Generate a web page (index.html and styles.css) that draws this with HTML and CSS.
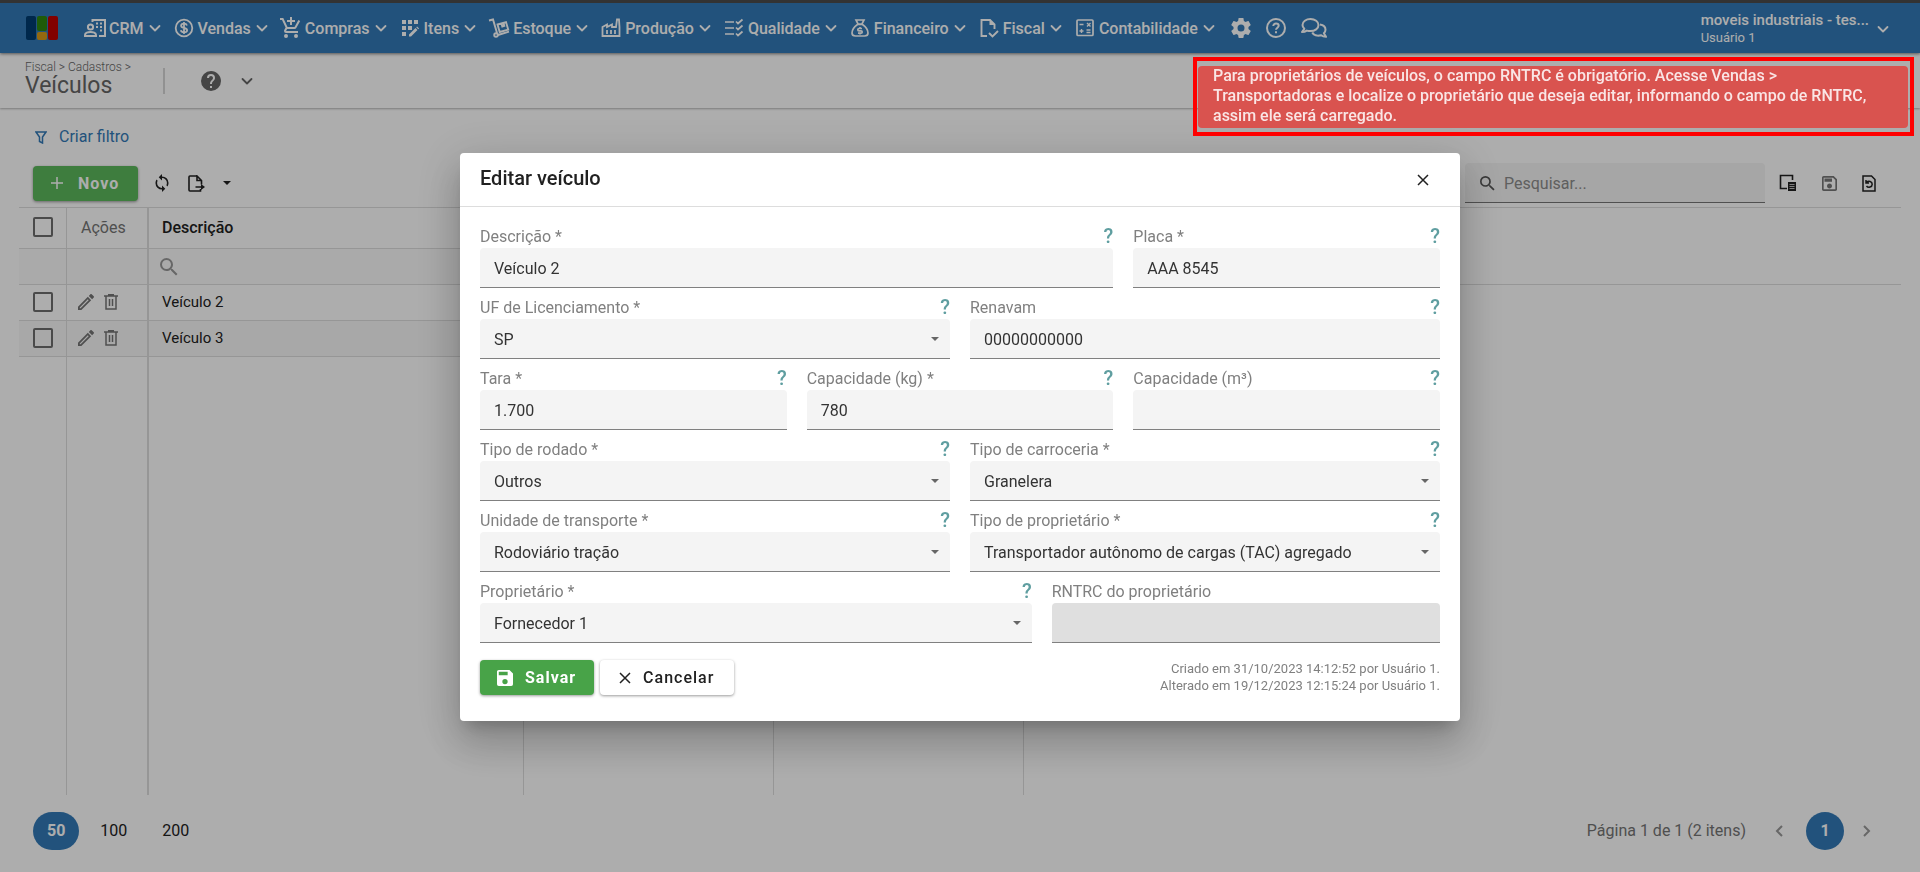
FILE: index.html
```html
<!DOCTYPE html>
<html lang="pt-BR">
<head>
  <meta charset="UTF-8">
  <title>Veículos</title>
  <meta name="viewport" content="width=device-width, initial-scale=1.0">
  <link rel="stylesheet" href="styles.css">
</head>
<body>

  <!-- shared icons -->
  <svg class="sprite" width="0" height="0">
    <symbol id="chevron" viewBox="0 0 12 12"><path d="M1.500 4L6 8.500 10.500 4" fill="none" stroke="currentColor" stroke-width="1.800" stroke-linecap="round" stroke-linejoin="round"/></symbol>
    <symbol id="search" viewBox="3 3 18 18"><path d="M9.5,3A6.5,6.5 0 0,1 16,9.5C16,11.11 15.41,12.59 14.44,13.73L14.71,14H15.5L20.5,19L19,20.5L14,15.5V14.71L13.73,14.44C12.59,15.41 11.11,16 9.5,16A6.5,6.5 0 0,1 3,9.5A6.5,6.5 0 0,1 9.5,3M9.5,5C7,5 5,7 5,9.5C5,12 7,14 9.5,14C12,14 14,12 14,9.5C14,7 12,5 9.5,5Z"/></symbol>
    <symbol id="pencil" viewBox="3 3 18 18"><path d="M14.06,9L15,9.94L5.92,19H5V18.08L14.06,9M17.66,3C17.41,3 17.15,3.1 16.96,3.29L15.13,5.12L18.88,8.87L20.71,7.04C21.1,6.65 21.1,6 20.71,5.63L18.37,3.29C18.17,3.09 17.92,3 17.66,3M14.06,6.19L3,17.25V21H6.75L17.81,9.94L14.06,6.19Z"/></symbol>
    <symbol id="trash" viewBox="0 0 14 16"><path d="M0 2h14M2 2v13h10V2M5.500 5v7M8.500 5v7" fill="none" stroke="currentColor" stroke-width="1.500"/><path d="M4 0h6v2H4z"/></symbol>
    <symbol id="close" viewBox="0 0 12 12"><path d="M1 1l10 10M11 1L1 11" fill="none" stroke="currentColor" stroke-width="1.5"/></symbol>
  </svg>

  <header class="topbar">
    <a class="logo" href="#" aria-label="Início">
      <svg width="32" height="24" viewBox="0 0 32 24">
        <rect x="0" y="0" width="10" height="24" rx="2" fill="#003c70"/>
        <rect x="11" y="0" width="10" height="15" rx="2" fill="#2f860c"/>
        <rect x="11" y="16" width="10" height="8" rx="2" fill="#d99a17"/>
        <rect x="22" y="0" width="10" height="24" rx="2" fill="#c00000"/>
      </svg>
    </a>
    <nav class="menu">
      <a class="menu-item" href="#">
        <svg class="menu-icon" viewBox="0 0 24 24" fill="none" stroke="currentColor" stroke-width="2"><circle cx="7.500" cy="11" r="2.600"/><path d="M2 20v-1c0-2 3-3 5.500-3s5.500 1 5.500 3v1zM9.500 6V4H22v16h-6"/><path d="M13 7.500h2M17 7.500h2M13 11h2M17 11h2M17 14.500h2" stroke-width="1.800"/></svg>
        <span>CRM</span><svg class="chev"><use href="#chevron"/></svg>
      </a>
      <a class="menu-item" href="#">
        <svg class="menu-icon" viewBox="0 0 24 24" fill="none" stroke="currentColor" stroke-width="1.800"><circle cx="12" cy="12" r="8.300"/><path d="M15 9.500c-.5-1.300-1.500-1.800-3-1.800-1.700 0-2.900.8-2.900 2.100 0 3 6 1.400 6 4.400 0 1.300-1.300 2.100-3.100 2.100-1.600 0-2.800-.7-3.200-2M12 6v12"/></svg>
        <span>Vendas</span><svg class="chev"><use href="#chevron"/></svg>
      </a>
      <a class="menu-item" href="#">
        <svg class="menu-icon" viewBox="0 0 24 24" fill="currentColor"><path d="M11 9H13V6H16V4H13V1H11V4H8V6H11M7 18A2 2 0 1 0 9 20A2 2 0 0 0 7 18M17 18A2 2 0 1 0 19 20A2 2 0 0 0 17 18M7.17 14.75L7.2 14.63L8.1 13H15.55C16.3 13 16.96 12.59 17.3 11.97L21.16 4.96L19.42 4H19.41L18.31 6L15.55 11H8.53L8.4 10.73L6.16 6L5.21 4L4.27 2H1V4H3L6.6 11.59L5.25 14.04C5.09 14.32 5 14.65 5 15A2 2 0 0 0 7 17H19V15H7.42A.25.25 0 0 1 7.17 14.75Z"/></svg>
        <span>Compras</span><svg class="chev"><use href="#chevron"/></svg>
      </a>
      <a class="menu-item" href="#">
        <svg class="menu-icon" viewBox="0 0 24 24" fill="currentColor"><path d="M4 4h4v4H4zM10 4h4v4h-4zM16 4h4v4h-4zM4 10h4v4H4zM10 10h4v4h-4zM4 16h4v4H4z"/><path d="M11 18.500l6.500-6.500 2 2-6.500 6.500h-2zM18.200 11.300l.9-.9 2 2-.9.9z"/></svg>
        <span>Itens</span><svg class="chev"><use href="#chevron"/></svg>
      </a>
      <a class="menu-item" href="#">
        <svg class="menu-icon" viewBox="0 0 24 24" fill="none" stroke="currentColor" stroke-width="1.900"><path d="M2 4.500L6 3.500 10 17M11 19l11-3.300"/><circle cx="9" cy="19" r="1.800"/><path d="M10.500 8.500l8.500-2.400 2.200 7.500-8.500 2.400zM14.500 7.500l.8 3 2-.6-.8-3"/></svg>
        <span>Estoque</span><svg class="chev"><use href="#chevron"/></svg>
      </a>
      <a class="menu-item" href="#">
        <svg class="menu-icon" viewBox="0 0 24 24" fill="none" stroke="currentColor" stroke-width="1.800"><path d="M3.500 20v-9L8 8.500V11l5-2.500V11h4L18 3.500h2l.5 7.500v9zM8 14v4M12 14v4M16 14v4"/></svg>
        <span>Produção</span><svg class="chev"><use href="#chevron"/></svg>
      </a>
      <a class="menu-item" href="#">
        <svg class="menu-icon" viewBox="0 0 24 24" fill="none" stroke="currentColor" stroke-width="1.700"><path d="M3 6h9M3 12h9M3 18h9M14 5.500l2 2L20.500 3.500M14 11.500l2 2 4.500-4M14 17.500l2 2 4.500-4"/></svg>
        <span>Qualidade</span><svg class="chev"><use href="#chevron"/></svg>
      </a>
      <a class="menu-item" href="#">
        <svg class="menu-icon" viewBox="0 0 24 24" fill="none" stroke="currentColor" stroke-width="1.700"><path d="M8 4h8l-2 4h-4zM9.500 8.500h5C18 11 20 14 20 17c0 2-1.500 3-3.500 3h-9C5.500 20 4 19 4 17c0-3 2-6 5.500-8.500z"/><path d="M14 12.500h-3c-1.600 0-1.600 2.300 0 2.300h2c1.600 0 1.600 2.300 0 2.300h-3M12 11v1.500M12 17v1.500"/></svg>
        <span>Financeiro</span><svg class="chev"><use href="#chevron"/></svg>
      </a>
      <a class="menu-item" href="#">
        <svg class="menu-icon" viewBox="0 0 24 24" fill="none" stroke="currentColor" stroke-width="1.900"><path d="M10 20H4.500V4H13l4.500 4.500V13M12 17l3.500 3.500L21 15"/><path d="M12.500 3.500v5.500h5.500z" fill="currentColor" stroke="none"/></svg>
        <span>Fiscal</span><svg class="chev"><use href="#chevron"/></svg>
      </a>
      <a class="menu-item" href="#">
        <svg class="menu-icon" viewBox="0 0 24 24" fill="none" stroke="currentColor" stroke-width="1.700"><rect x="4" y="4" width="16" height="15.500" rx="1"/><path d="M6.500 8.500h4M6.500 15h4M8.500 13v4M13.500 14h4M13.500 16.500h4M14 7l3.500 3.500M17.500 7L14 10.500" stroke-width="1.400"/></svg>
        <span>Contabilidade</span><svg class="chev"><use href="#chevron"/></svg>
      </a>
    </nav>
    <div class="shortcuts">
      <a href="#" aria-label="Configurações"><svg width="20" height="20" viewBox="2 2 20 20" fill="currentColor"><path d="M12,15.500A3.500,3.500 0 0,1 8.500,12A3.500,3.500 0 0,1 12,8.500A3.500,3.500 0 0,1 15.500,12A3.500,3.500 0 0,1 12,15.500M19.430,12.970C19.470,12.650 19.500,12.330 19.500,12C19.500,11.670 19.470,11.340 19.430,11L21.540,9.370C21.730,9.220 21.780,8.950 21.660,8.730L19.660,5.270C19.540,5.050 19.270,4.960 19.050,5.050L16.560,6.050C16.040,5.660 15.500,5.320 14.870,5.070L14.500,2.420C14.460,2.180 14.250,2 14,2H10C9.750,2 9.540,2.180 9.500,2.420L9.130,5.070C8.500,5.320 7.960,5.660 7.440,6.050L4.950,5.050C4.730,4.960 4.460,5.050 4.340,5.270L2.340,8.730C2.210,8.950 2.270,9.220 2.460,9.370L4.570,11C4.530,11.340 4.500,11.670 4.500,12C4.500,12.330 4.530,12.650 4.570,12.970L2.460,14.630C2.270,14.780 2.210,15.050 2.340,15.270L4.340,18.730C4.460,18.950 4.730,19.030 4.950,18.950L7.440,17.940C7.960,18.340 8.500,18.680 9.130,18.930L9.500,21.580C9.540,21.820 9.750,22 10,22H14C14.250,22 14.460,21.820 14.500,21.580L14.870,18.930C15.500,18.670 16.040,18.340 16.560,17.940L19.050,18.950C19.270,19.030 19.540,18.950 19.660,18.730L21.660,15.270C21.780,15.050 21.730,14.780 21.540,14.630L19.430,12.970Z"/></svg></a>
      <a href="#" aria-label="Ajuda"><svg width="20" height="20" viewBox="0 0 20 20" fill="none" stroke="currentColor" stroke-width="2"><circle cx="10" cy="10" r="9"/><path d="M7.300 8c0-1.600 1.200-2.500 2.700-2.500s2.700.9 2.700 2.300c0 1.800-2.700 2-2.700 4M10 13.200v2"/></svg></a>
      <a href="#" aria-label="Mensagens"><svg width="26" height="20" viewBox="0 0 26 20" fill="none" stroke="currentColor" stroke-width="2" stroke-linejoin="round"><path d="M9.500 1C5 1 1.500 3.500 1.500 7c0 1.500.7 2.800 1.800 3.800L1 14c2 0 3.500-.5 4.800-1.400 1.100.3 2.300.5 3.700.5 4.500 0 8-2.600 8-6s-3.500-6.100-8-6.100z"/><path d="M19 6.500c3.200.5 5.500 2.500 5.500 5.200 0 1.400-.6 2.600-1.600 3.600L25 18.800c-2 0-3.600-.5-4.800-1.500-4 1-7.700-.3-9-2.800"/></svg></a>
    </div>
    <a class="account" href="#">
      <span class="account-text"><strong>moveis industriais - tes...</strong><small>Usuário 1</small></span>
      <svg class="chev"><use href="#chevron"/></svg>
    </a>
  </header>

  <div class="page-head">
    <div>
      <div class="crumbs">Fiscal &gt; Cadastros &gt;</div>
      <h1>Veículos</h1>
    </div>
    <div class="divider"></div>
    <button class="icon-btn" aria-label="Ajuda"><svg width="20" height="20" viewBox="2 2 20 20"><path d="M15.070,11.250L14.170,12.170C13.450,12.890 13,13.500 13,15H11V14.500C11,13.390 11.450,12.390 12.170,11.670L13.410,10.410C13.780,10.050 14,9.550 14,9C14,7.890 13.100,7 12,7A2,2 0 0,0 10,9H8A4,4 0 0,1 12,5A4,4 0 0,1 16,9C16,9.880 15.640,10.670 15.070,11.250M13,19H11V17H13M12,2A10,10 0 0,0 2,12A10,10 0 0,0 12,22A10,10 0 0,0 22,12C22,6.470 17.500,2 12,2Z"/></svg></button>
    <button class="icon-btn" aria-label="Mais"><svg class="chev"><use href="#chevron"/></svg></button>
  </div>

  <main>
    <a class="filter-link" href="#">
      <svg width="12" height="13" viewBox="0 0 12 13"><path d="M1 1h10L7.500 6v6l-3-1.500V6z" fill="none" stroke="currentColor" stroke-width="1.500"/></svg>
      Criar filtro
    </a>

    <div class="toolbar">
      <button class="btn btn-green btn-new"><svg width="12" height="12" viewBox="0 0 12 12"><path d="M6 0v12M0 6h12" stroke="currentColor" stroke-width="1.500"/></svg>Novo</button>
      <button class="icon-btn" aria-label="Atualizar"><svg width="16" height="18" viewBox="3 1 18 22"><path d="M12,18A6,6 0 0,1 6,12C6,11 6.250,10.030 6.700,9.200L5.240,7.740C4.460,8.970 4,10.430 4,12A8,8 0 0,0 12,20V23L16,19L12,15M12,4V1L8,5L12,9V6A6,6 0 0,1 18,12C18,13 17.750,13.970 17.300,14.800L18.760,16.260C19.540,15.030 20,13.570 20,12A8,8 0 0,0 12,4Z"/></svg></button>
      <button class="icon-btn" aria-label="Exportar"><svg width="17" height="17" viewBox="0 0 17 17"><path d="M9 1H2C1.400 1 1 1.400 1 2v13c0 .6.400 1 1 1h10.500v-2M13.500 9.500V5.500L9 1v4.500h4.500M7.500 12H14" fill="none" stroke="currentColor" stroke-width="1.600"/><path d="M13 9l4 3-4 3z"/></svg></button>
      <button class="icon-btn" aria-label="Opções"><svg width="8" height="4" viewBox="0 0 8 4"><path d="M0 0h8L4 4z"/></svg></button>
      <div class="search-box">
        <svg width="15" height="15"><use href="#search"/></svg>
        <input type="text" placeholder="Pesquisar..." aria-label="Pesquisar">
      </div>
      <div class="grid-tools">
        <button class="icon-btn" aria-label="Colunas"><svg width="18" height="18" viewBox="0 0 18 18"><path d="M8 14.500H1.500v-13h12V6" fill="none" stroke="currentColor" stroke-width="1.600"/><path d="M9 8h8v9H9z"/><path d="M10.500 10.500h5M10.500 12.500h5M10.500 14.500h5" stroke="#fff" stroke-width="0.700"/></svg></button>
        <button class="icon-btn muted" aria-label="Salvar layout"><svg width="15" height="15" viewBox="3 3 18 18"><path d="M17 3H5C3.890 3 3 3.900 3 5V19C3 20.100 3.890 21 5 21H19C20.100 21 21 20.100 21 19V7L17 3M19 19H5V5H16.170L19 7.830V19M12 12C10.340 12 9 13.340 9 15S10.340 18 12 18 15 16.660 15 15 13.660 12 12 12M6 6H15V10H6V6Z"/></svg></button>
        <button class="icon-btn" aria-label="Restaurar layout"><svg width="14" height="17" viewBox="0 0 14 17"><path d="M1 1h8.500L13 4.500V16H1zM4.500 7.500C6.500 5.200 10.200 6.500 10.200 9.200c0 3-4 4-5.700 1.800M4 5v3h3" fill="none" stroke="currentColor" stroke-width="1.500"/></svg></button>
      </div>
    </div>

    <div class="grid">
      <table>
        <colgroup><col class="col-check"><col class="col-actions"><col class="col-desc"><col class="col-data"><col class="col-data"><col></colgroup>
        <thead>
          <tr>
            <th><input type="checkbox" aria-label="Selecionar todos"></th>
            <th class="th-actions">Ações</th>
            <th>Descrição</th>
            <th></th>
            <th></th>
            <th></th>
          </tr>
        </thead>
        <tbody>
          <tr class="filter-row">
            <td></td><td></td>
            <td><svg width="18" height="18"><use href="#search"/></svg></td>
            <td></td><td></td><td></td>
          </tr>
          <tr>
            <td><input type="checkbox" aria-label="Selecionar Veículo 2"></td>
            <td><div class="actions">
              <button class="icon-btn" aria-label="Editar"><svg width="16" height="16"><use href="#pencil"/></svg></button>
              <button class="icon-btn" aria-label="Excluir"><svg width="14" height="16"><use href="#trash"/></svg></button>
            </div></td>
            <td>Veículo 2</td><td></td><td></td><td></td>
          </tr>
          <tr class="alt">
            <td><input type="checkbox" aria-label="Selecionar Veículo 3"></td>
            <td><div class="actions">
              <button class="icon-btn" aria-label="Editar"><svg width="16" height="16"><use href="#pencil"/></svg></button>
              <button class="icon-btn" aria-label="Excluir"><svg width="14" height="16"><use href="#trash"/></svg></button>
            </div></td>
            <td>Veículo 3</td><td></td><td></td><td></td>
          </tr>
          <tr class="filler"><td></td><td></td><td></td><td></td><td></td><td></td></tr>
        </tbody>
      </table>
    </div>

    <div class="pager">
      <button class="page-size active">50</button>
      <button class="page-size">100</button>
      <button class="page-size">200</button>
      <span class="page-info">Página 1 de 1 (2 itens)</span>
      <button class="page-arrow" aria-label="Anterior"><svg width="8" height="12" viewBox="0 0 8 12"><path d="M7 1L2 6l5 5" fill="none" stroke="currentColor" stroke-width="2"/></svg></button>
      <button class="page-size page-num active">1</button>
      <button class="page-arrow" aria-label="Próxima"><svg width="8" height="12" viewBox="0 0 8 12"><path d="M1 1l5 5-5 5" fill="none" stroke="currentColor" stroke-width="2"/></svg></button>
    </div>
  </main>

  <div class="overlay">
    <form class="modal" role="dialog" aria-labelledby="modal-title">
      <div class="modal-head">
        <h2 id="modal-title">Editar veículo</h2>
        <button type="button" class="icon-btn" aria-label="Fechar"><svg width="12" height="12"><use href="#close"/></svg></button>
      </div>
      <div class="modal-body">
        <div class="fields">
          <div class="field span-8">
            <div class="field-top"><label for="descricao">Descrição *</label><span class="hint">?</span></div>
            <input type="text" id="descricao" value="Veículo 2">
          </div>
          <div class="field span-4">
            <div class="field-top"><label for="placa">Placa *</label><span class="hint">?</span></div>
            <input type="text" id="placa" value="AAA 8545">
          </div>
          <div class="field span-6">
            <div class="field-top"><label for="uf">UF de Licenciamento *</label><span class="hint">?</span></div>
            <div class="select"><select id="uf"><option>SP</option></select></div>
          </div>
          <div class="field span-6">
            <div class="field-top"><label for="renavam">Renavam</label><span class="hint">?</span></div>
            <input type="text" id="renavam" value="00000000000">
          </div>
          <div class="field span-4">
            <div class="field-top"><label for="tara">Tara *</label><span class="hint">?</span></div>
            <input type="text" id="tara" value="1.700">
          </div>
          <div class="field span-4">
            <div class="field-top"><label for="cap-kg">Capacidade (kg) *</label><span class="hint">?</span></div>
            <input type="text" id="cap-kg" value="780">
          </div>
          <div class="field span-4">
            <div class="field-top"><label for="cap-m3">Capacidade (m³)</label><span class="hint">?</span></div>
            <input type="text" id="cap-m3">
          </div>
          <div class="field span-6">
            <div class="field-top"><label for="rodado">Tipo de rodado *</label><span class="hint">?</span></div>
            <div class="select"><select id="rodado"><option>Outros</option></select></div>
          </div>
          <div class="field span-6">
            <div class="field-top"><label for="carroceria">Tipo de carroceria *</label><span class="hint">?</span></div>
            <div class="select"><select id="carroceria"><option>Granelera</option></select></div>
          </div>
          <div class="field span-6">
            <div class="field-top"><label for="unidade">Unidade de transporte *</label><span class="hint">?</span></div>
            <div class="select"><select id="unidade"><option>Rodoviário tração</option></select></div>
          </div>
          <div class="field span-6">
            <div class="field-top"><label for="tipo-prop">Tipo de proprietário *</label><span class="hint">?</span></div>
            <div class="select"><select id="tipo-prop"><option>Transportador autônomo de cargas (TAC) agregado</option></select></div>
          </div>
          <div class="field span-7">
            <div class="field-top"><label for="proprietario">Proprietário *</label><span class="hint">?</span></div>
            <div class="select"><select id="proprietario"><option>Fornecedor 1</option></select></div>
          </div>
          <div class="field span-5">
            <div class="field-top"><label for="rntrc">RNTRC do proprietário</label></div>
            <input type="text" id="rntrc" disabled>
          </div>
        </div>
        <div class="modal-foot">
          <button type="button" class="btn btn-green btn-save"><svg width="16" height="16" viewBox="3 3 18 18"><path d="M15,9H5V5H15M12,19A3,3 0 0,1 9,16A3,3 0 0,1 12,13A3,3 0 0,1 15,16A3,3 0 0,1 12,19M17,3H5C3.890,3 3,3.900 3,5V19A2,2 0 0,0 5,21H19A2,2 0 0,0 21,19V7L17,3Z"/></svg>Salvar</button>
          <button type="button" class="btn btn-cancel"><svg width="12" height="12"><use href="#close"/></svg>Cancelar</button>
          <div class="log">Criado em 31/10/2023 14:12:52 por Usuário 1.<br>Alterado em 19/12/2023 12:15:24 por Usuário 1.</div>
        </div>
      </div>
    </form>
  </div>

  <div class="alert-frame">
    <div class="alert" role="alert">Para proprietários de veículos, o campo RNTRC é obrigatório. Acesse Vendas &gt; Transportadoras e localize o proprietário que deseja editar, informando o campo de RNTRC, assim ele será carregado.</div>
  </div>

</body>
</html>
```
FILE: styles.css
```css
* {
  box-sizing: border-box;
}

body {
  font-family: Roboto, sans-serif;
  font-size: 16px;
  color: #212121;
  background: #fff;
  margin: 0;
  height: 100vh;
  display: flex;
  flex-direction: column;
  overflow: hidden;
}

a {
  color: inherit;
  text-decoration: none;
}

button, input, select {
  font: inherit;
  color: inherit;
}

svg {
  fill: currentColor;
  flex-shrink: 0;
}

.sprite {
  position: absolute;
}

.chev {
  width: 12px;
  height: 12px;
}

.icon-btn {
  display: flex;
  padding: 0;
  border: none;
  background: none;
}

/* top bar */
.topbar {
  display: flex;
  align-items: center;
  height: 53px;
  padding: 0 31px 0 26px;
  border-top: 3px solid #4c4c4c;
  background: #337ab7;
  color: #fff;
  box-shadow: 0 1px 3px rgba(0,0,0,0.5);
  position: relative;
}

.logo {
  display: flex;
}

.menu {
  display: flex;
  gap: 11px;
  margin-left: 25px;
}

.menu-item {
  display: flex;
  align-items: center;
  font-weight: 500;
}

.menu-icon {
  width: 24px;
  height: 24px;
  margin-right: 2px;
}

.menu-icon[fill="none"] {
  fill: none;
}

.menu-item .chev {
  margin-left: 5px;
}

.shortcuts {
  display: flex;
  gap: 15px;
  margin-left: 16px;
}

.shortcuts a {
  display: flex;
}

.shortcuts svg[fill="none"] {
  fill: none;
}

.account {
  display: flex;
  align-items: center;
  gap: 8px;
  margin-left: auto;
  padding-top: 2px;
}

.account-text {
  display: flex;
  flex-direction: column;
  font-size: 15px;
  line-height: 17px;
}

.account strong {
  font-weight: 500;
}

.account small {
  font-size: 13px;
}

/* page title */
.page-head {
  display: flex;
  align-items: center;
  height: 55px;
  padding: 0 25px;
  color: #666;
  box-shadow: 0 1px 2px rgba(0,0,0,0.3);
}

.crumbs {
  font-size: 12px;
  font-weight: 300;
  line-height: 14px;
}

.page-head h1 {
  margin: 0 0 4px;
  font-size: 23px;
  font-weight: 400;
  line-height: 24px;
}

.divider {
  width: 2px;
  height: 26px;
  margin: 0 36px 0 32px;
  background: #d6d6d6;
}

.page-head .icon-btn + .icon-btn {
  margin-left: 20px;
}

/* content */
main {
  flex: 1;
  display: flex;
  flex-direction: column;
  padding: 0 19px;
  min-height: 0;
}

.filter-link {
  display: flex;
  align-items: center;
  gap: 12px;
  margin: 19px 0 16px 16px;
  line-height: 20px;
  color: #337ab7;
}

.toolbar {
  display: flex;
  align-items: center;
  height: 44px;
  padding: 0 25px 4px 14px;
}

.toolbar > .icon-btn {
  margin-left: 18px;
}

.btn {
  display: inline-flex;
  align-items: center;
  height: 35px;
  padding: 0 19px 0 18px;
  border: none;
  border-radius: 4px;
  background: #fff;
  letter-spacing: 1px;
  font-weight: 500;
  box-shadow: 0 1px 3px rgba(0,0,0,0.4);
}

.btn-green {
  background: #48a348;
  color: #fff;
  font-weight: 700;
}

.btn-new {
  background: #5cb85c;
}

.btn-new svg {
  margin-right: 15px;
}

.toolbar > .btn + .icon-btn {
  margin-left: 16px;
}

.search-box {
  display: flex;
  align-items: center;
  gap: 9px;
  width: 300px;
  height: 40px;
  margin-left: auto;
  padding: 1px 16px 0 15px;
  border-radius: 4px 4px 0 0;
  border-bottom: 1px solid #777;
  background: #f5f5f5;
  color: #555;
}

.search-box input {
  flex: 1;
  min-width: 0;
  padding: 0;
  border: none;
  background: none;
}

.search-box input::placeholder {
  color: #8c8c8c;
}

.grid-tools {
  display: flex;
  align-items: center;
  gap: 25px;
  margin-left: 14px;
}

.muted {
  color: #777;
}

.grid {
  flex: 1;
  min-height: 0;
}

table {
  width: 100%;
  height: 100%;
  table-layout: fixed;
  border-collapse: separate;
  border-spacing: 0;
  border-top: 1px solid #ddd;
}

.col-check { width: 48px; }
.col-actions { width: 82px; }
.col-desc { width: 375px; }
.col-data { width: 250px; }

th, td {
  height: 36px;
  padding: 0 13px 2px;
  border-right: 1px solid #ddd;
  border-bottom: 1px solid #ddd;
  text-align: left;
  font-size: 15px;
}

th {
  height: 41px;
  font-size: 16px;
  font-weight: 500;
}

th:first-child, td:first-child,
th:nth-child(2), td:nth-child(2) {
  padding-left: 14px;
}

.th-actions {
  font-weight: 400;
  color: #757575;
}

th:nth-child(2), td:nth-child(2) {
  border-right-width: 2px;
}

th:last-child, td:last-child {
  border-right: none;
  border-bottom: none;
}

.filter-row td {
  background: #fbfbfb;
  color: #999;
  padding: 0 11px;
}

.filter-row td:last-child {
  background: none;
  border-bottom: 1px solid #ddd;
}

.filter-row svg, td svg, td input, th input {
  display: block;
}

.alt td:not(:last-child) {
  background: #f8f8f8;
}

.filler td {
  height: auto;
  border-bottom: none;
}

input[type="checkbox"] {
  appearance: none;
  width: 20px;
  height: 20px;
  margin: 0;
  border: 2px solid #6e6e6e;
  border-radius: 2px;
}

.actions {
  display: flex;
  align-items: center;
  gap: 10px;
  margin-left: -3px;
  color: #757575;
}

/* pager */
.pager {
  display: flex;
  align-items: center;
  height: 77px;
  padding: 0 24px 5px 14px;
  gap: 7px;
}

.page-size {
  min-width: 38px;
  height: 38px;
  padding: 0 14px 1px;
  border: none;
  border-radius: 20px;
  background: none;
}

.active {
  background: #337ab7;
  color: #fff;
  font-weight: 700;
}

.page-num {
  margin: 0 6px 0 10px;
}

.page-info {
  margin-left: auto;
  margin-right: 16px;
  padding-bottom: 2px;
  color: #757575;
}

.page-arrow {
  display: flex;
  padding: 0 6px;
  border: none;
  background: none;
  color: #999;
}

/* modal */
.overlay {
  position: fixed;
  inset: 0;
  padding-top: 153px;
  background: rgba(0,0,0,0.32);
}

.modal {
  width: 1000px;
  max-width: 100%;
  margin: 0 auto;
  border-radius: 4px;
  background: #fff;
  box-shadow: 0 11px 15px -7px rgba(0,0,0,0.2), 0 24px 38px 3px rgba(0,0,0,0.14), 0 9px 46px 8px rgba(0,0,0,0.12);
}

.modal-head {
  display: flex;
  align-items: center;
  justify-content: space-between;
  height: 54px;
  padding: 0 31px 0 20px;
  border-bottom: 1px solid #ddd;
}

.modal-head h2 {
  margin: 0 0 4px;
  font-size: 20px;
  font-weight: 500;
}

.modal-body {
  padding: 19px 20px 26px;
}

.fields {
  display: grid;
  grid-template-columns: repeat(12, 1fr);
  gap: 9px 20px;
}

.span-4 { grid-column: span 4; }
.span-5 { grid-column: span 5; }
.span-6 { grid-column: span 6; }
.span-7 { grid-column: span 7; }
.span-8 { grid-column: span 8; }

.field-top {
  display: flex;
  justify-content: space-between;
  height: 22px;
  line-height: 22px;
  color: #808080;
}

.hint {
  font-size: 20px;
  font-weight: 500;
  line-height: 20px;
  color: #5f9ea0;
}

.field input, .field select {
  display: block;
  width: 100%;
  height: 40px;
  padding: 2px 14px 0;
  border: none;
  border-bottom: 1px solid #808080;
  border-radius: 4px 4px 0 0;
  background: #f4f4f4;
  color: #333;
  appearance: none;
}

.field input:disabled {
  background: #dfdfdf;
}

.select {
  position: relative;
}

.select::after {
  content: "";
  position: absolute;
  right: 11px;
  top: 18px;
  border: 4px solid transparent;
  border-top-color: #666;
  border-bottom: none;
}

.modal-foot {
  display: flex;
  align-items: center;
  gap: 6px;
  margin-top: 17px;
}

.modal-foot svg {
  margin-right: 12px;
}

.btn-save {
  padding: 0 18px 0 17px;
}

.btn-cancel {
  padding: 0 20px 0 19px;
}

.log {
  margin-left: auto;
  padding-bottom: 1px;
  text-align: right;
  font-size: 13px;
  line-height: 17px;
  color: #808080;
}

/* alert */
.alert-frame {
  position: fixed;
  top: 57px;
  right: 6px;
  width: 721px;
  padding: 5px 2px 4px 1px;
  border: 4px solid #f00;
}

.alert {
  padding: 0 15px 2px;
  border-radius: 4px;
  background: #d9534f;
  color: rgba(255,255,255,0.85);
  font-weight: 500;
  line-height: 20px;
}
```
